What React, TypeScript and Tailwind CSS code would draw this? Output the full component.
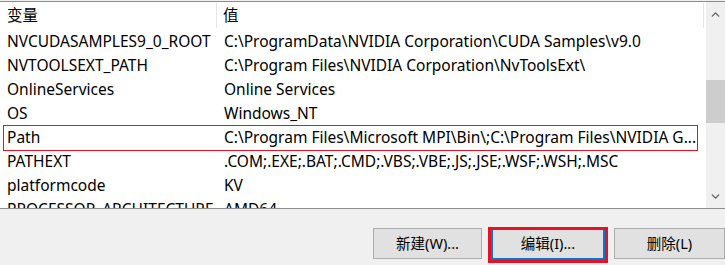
import { ChevronUp, ChevronDown } from 'lucide-react'

const ROWS: [string, string][] = [
  ['NVCUDASAMPLES9_0_ROOT', 'C:\\ProgramData\\NVIDIA Corporation\\CUDA Samples\\v9.0'],
  ['NVTOOLSEXT_PATH', 'C:\\Program Files\\NVIDIA Corporation\\NvToolsExt\\'],
  ['OnlineServices', 'Online Services'],
  ['OS', 'Windows_NT'],
  ['Path', 'C:\\Program Files\\Microsoft MPI\\Bin\\;C:\\Program Files\\NVIDIA G...'],
  ['PATHEXT', '.COM;.EXE;.BAT;.CMD;.VBS;.VBE;.JS;.JSE;.WSF;.WSH;.MSC'],
  ['platformcode', 'KV'],
  ['PROCESSOR_ARCHITECTURE', 'AMD64'],
]

export default function App() {
  return (
    <div
      className="w-[725px] h-[265px] bg-[#f0f0f0] overflow-hidden text-black"
      style={{ fontFamily: '"Noto Sans", "Noto Sans CJK SC", sans-serif' }}
    >
      <div className="h-[1px]" />
      {/* List view */}
      <div className="h-[208px] bg-white border-t border-b border-[#8c8c8c] flex">
        <div className="w-[706px] overflow-hidden text-[15.5px] leading-none">
          {/* Header */}
          <div className="h-[27px] flex">
            <div className="w-[217px] pl-[7px] flex items-center border-r border-[#e5e5e5] my-[1px]">变量</div>
            <div className="w-[487px] pl-[6px] flex items-center border-r border-[#e5e5e5] my-[1px]">值</div>
          </div>
          {ROWS.map(([k, v]) => (
            <div key={k} className="relative h-[24px] pt-[1px] flex items-center whitespace-nowrap">
              <div className="w-[217px] pl-[7px] shrink-0">{k}</div>
              <div className="pl-[7px]">{v}</div>
              {k === 'Path' && (
                <div className="absolute left-[3px] right-[8px] top-0 bottom-[-2px] border border-[#e81123]" />
              )}
            </div>
          ))}
        </div>
        {/* Scrollbar */}
        <div className="w-[19px] bg-[#f0f0f0] flex flex-col items-center">
          <div className="h-[22px] flex items-center justify-center pt-[3px]">
            <ChevronUp size={13} strokeWidth={2.5} className="text-[#606060]" />
          </div>
          <div className="h-[56px]" />
          <div className="h-[43px] w-full bg-[#cdcdcd]" />
          <div className="flex-1" />
          <div className="h-[22px] flex items-center justify-center pb-[2px]">
            <ChevronDown size={13} strokeWidth={2.5} className="text-[#606060]" />
          </div>
        </div>
      </div>
      {/* Buttons */}
      <div className="flex pl-[373px] pt-[18px] gap-[6px] text-[14.5px]">
        <button className="w-[111px] h-[31px] mt-[1px] bg-[#e1e1e1] border border-[#adadad] flex items-center justify-center">
          新建(W)...
        </button>
        <div className="border-[3px] border-[#e81123]">
          <button className="w-[114px] h-[30px] bg-[#e1e1e1] border-[2px] border-t-0 border-[#0078d7] flex items-center justify-center">
            编辑(I)...
          </button>
        </div>
        <button className="w-[111px] h-[31px] mt-[1px] bg-[#e1e1e1] border border-[#adadad] flex items-center justify-center shrink-0">
          删除(L)
        </button>
      </div>
    </div>
  )
}
